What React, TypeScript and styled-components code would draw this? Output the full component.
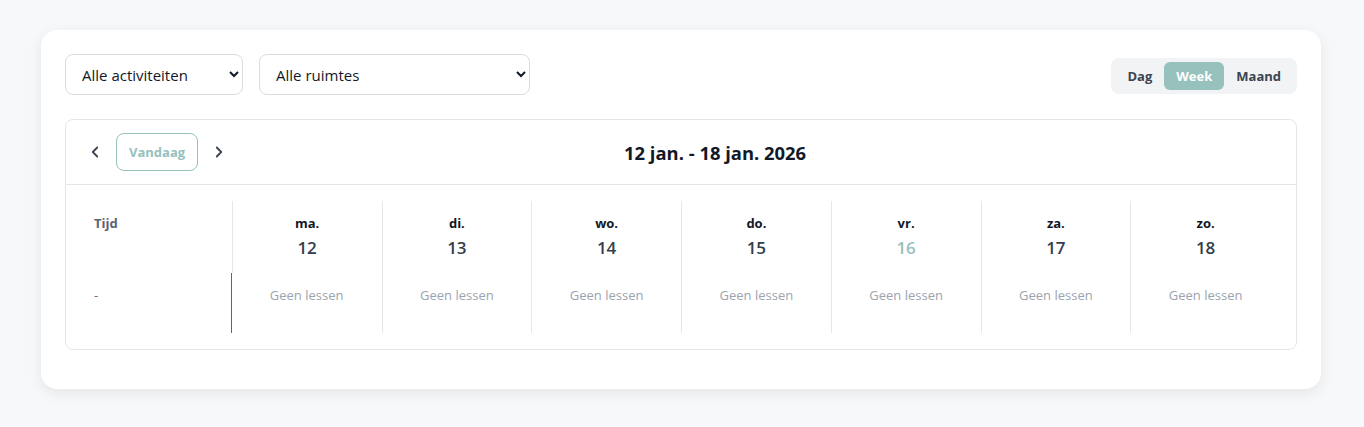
import React from 'react';
import styled, { createGlobalStyle } from 'styled-components';

const GlobalStyle = createGlobalStyle`
    body {
        margin: 0;
        background: #f7f8fa;
        font-family: 'Open Sans', 'Noto Sans', sans-serif;
        color: #1f2937;
    }
`;

const Page = styled.div`
    padding: 30px 43px 38px 41px;
`;

const Card = styled.div`
    background: #ffffff;
    border-radius: 16px;
    box-shadow: 0 4px 14px rgba(0, 0, 0, 0.08);
    padding: 24px 24px 39px 24px;
`;

const Toolbar = styled.div`
    display: flex;
    align-items: center;
    justify-content: space-between;
    margin-bottom: 24px;
`;

const Filters = styled.div`
    display: flex;
    gap: 16px;
`;

const Select = styled.select<{ $width: number }>`
    width: ${(p) => p.$width}px;
    height: 41px;
    padding: 0 12px;
    border: 1px solid #d9dde2;
    border-radius: 8px;
    background: #fff;
    font-family: 'Open Sans', sans-serif;
    font-size: 15px;
    color: #111827;
`;

const ViewToggle = styled.div`
    display: flex;
    background: #f1f3f5;
    border-radius: 8px;
    padding: 4px;
    margin-top: 2px;
`;

const ToggleButton = styled.button<{ $active?: boolean }>`
    height: 28px;
    padding: 0 12px;
    border: none;
    border-radius: 6px;
    font-family: 'Open Sans', sans-serif;
    font-size: 13px;
    font-weight: 700;
    cursor: pointer;
    background: ${(p) => (p.$active ? '#96c1bd' : 'transparent')};
    color: ${(p) => (p.$active ? '#ffffff' : '#3a4452')};
`;

const CalendarPanel = styled.div`
    border: 1px solid #e3e6ea;
    border-radius: 8px;
`;

const CalendarHeader = styled.div`
    display: flex;
    align-items: center;
    height: 64px;
    padding: 0 114px 0 16px;
    border-bottom: 1px solid #e3e6ea;
`;

const NavGroup = styled.div`
    display: flex;
    align-items: center;
    gap: 8px;
`;

const IconButton = styled.button`
    width: 26px;
    height: 30px;
    display: flex;
    align-items: center;
    justify-content: center;
    border: none;
    background: none;
    padding: 0;
    color: #3a4452;
    cursor: pointer;
`;

const TodayButton = styled.button`
    height: 38px;
    padding: 0 12px;
    border: 1px solid #96c1bd;
    border-radius: 8px;
    background: #fff;
    color: #96c1bd;
    font-family: 'Open Sans', sans-serif;
    font-size: 13px;
    font-weight: 700;
`;

const Title = styled.h2`
    flex: 1;
    margin: 0 0 0 16px;
    text-align: center;
    font-size: 18.4px;
    font-weight: 700;
    color: #111827;
`;

const GridWrap = styled.div`
    padding: 16px;
`;

const Grid = styled.div`
    display: grid;
    grid-template-columns: repeat(8, 1fr);
    grid-template-rows: 72px 60px;
    border-radius: 8px;
`;

const HeadCell = styled.div<{ $first?: boolean }>`
    display: flex;
    flex-direction: column;
    align-items: ${(p) => (p.$first ? 'flex-start' : 'center')};
    padding: 13px ${(p) => (p.$first ? '12px' : '0')} 0;
    border-left: ${(p) => (p.$first ? 'none' : '1px solid #e5e7eb')};
`;

const DayName = styled.span`
    font-size: 13px;
    font-weight: 700;
    color: #111827;
    line-height: 18px;
`;

const TimeLabel = styled.span`
    font-size: 13px;
    font-weight: 700;
    color: #5b6470;
    line-height: 18px;
`;

const DayNumber = styled.span<{ $today?: boolean }>`
    font-size: 17px;
    font-weight: 600;
    line-height: 26px;
    margin-top: 3px;
    color: ${(p) => (p.$today ? '#96c1bd' : '#333d4b')};
`;

const TimeCell = styled.div`
    display: flex;
    align-items: center;
    padding: 0 0 16px 12px;
    font-size: 13px;
    color: #6b7280;
    border-right: 1px solid #5d6675;
`;

const BodyCell = styled.div<{ $first?: boolean }>`
    display: flex;
    justify-content: center;
    align-items: center;
    padding-bottom: 16px;
    font-size: 13px;
    color: #9ca3af;
    border-left: ${(p) => (p.$first ? 'none' : '1px solid #e5e7eb')};
`;

const Chevron = ({ dir }: { dir: 'left' | 'right' }) => (
    <svg width="18" height="18" viewBox="0 0 24 24" fill="none" stroke="currentColor" strokeWidth="2.4" strokeLinecap="round" strokeLinejoin="round">
        <path d={dir === 'left' ? 'M15 18l-6-6 6-6' : 'M9 18l6-6-6-6'} />
    </svg>
);

const days = [
    { name: 'ma.', num: 12 },
    { name: 'di.', num: 13 },
    { name: 'wo.', num: 14 },
    { name: 'do.', num: 15 },
    { name: 'vr.', num: 16, today: true },
    { name: 'za.', num: 17 },
    { name: 'zo.', num: 18 },
];

const App: React.FC = () => (
    <>
        <GlobalStyle />
        <Page>
            <Card>
                <Toolbar>
                    <Filters>
                        <Select $width={178}>
                            <option>Alle activiteiten</option>
                        </Select>
                        <Select $width={271}>
                            <option>Alle ruimtes</option>
                        </Select>
                    </Filters>
                    <ViewToggle>
                        <ToggleButton>Dag</ToggleButton>
                        <ToggleButton $active>Week</ToggleButton>
                        <ToggleButton>Maand</ToggleButton>
                    </ViewToggle>
                </Toolbar>
                <CalendarPanel>
                    <CalendarHeader>
                        <NavGroup>
                            <IconButton><Chevron dir="left" /></IconButton>
                            <TodayButton>Vandaag</TodayButton>
                            <IconButton><Chevron dir="right" /></IconButton>
                        </NavGroup>
                        <Title>12 jan. - 18 jan. 2026</Title>
                    </CalendarHeader>
                    <GridWrap>
                        <Grid>
                            <HeadCell $first>
                                <TimeLabel>Tijd</TimeLabel>
                            </HeadCell>
                            {days.map((d) => (
                                <HeadCell key={d.name}>
                                    <DayName>{d.name}</DayName>
                                    <DayNumber $today={d.today}>{d.num}</DayNumber>
                                </HeadCell>
                            ))}
                            <TimeCell>-</TimeCell>
                            {days.map((d, i) => (
                                <BodyCell key={d.name} $first={i === 0}>Geen lessen</BodyCell>
                            ))}
                        </Grid>
                    </GridWrap>
                </CalendarPanel>
            </Card>
        </Page>
    </>
);

export default App;
